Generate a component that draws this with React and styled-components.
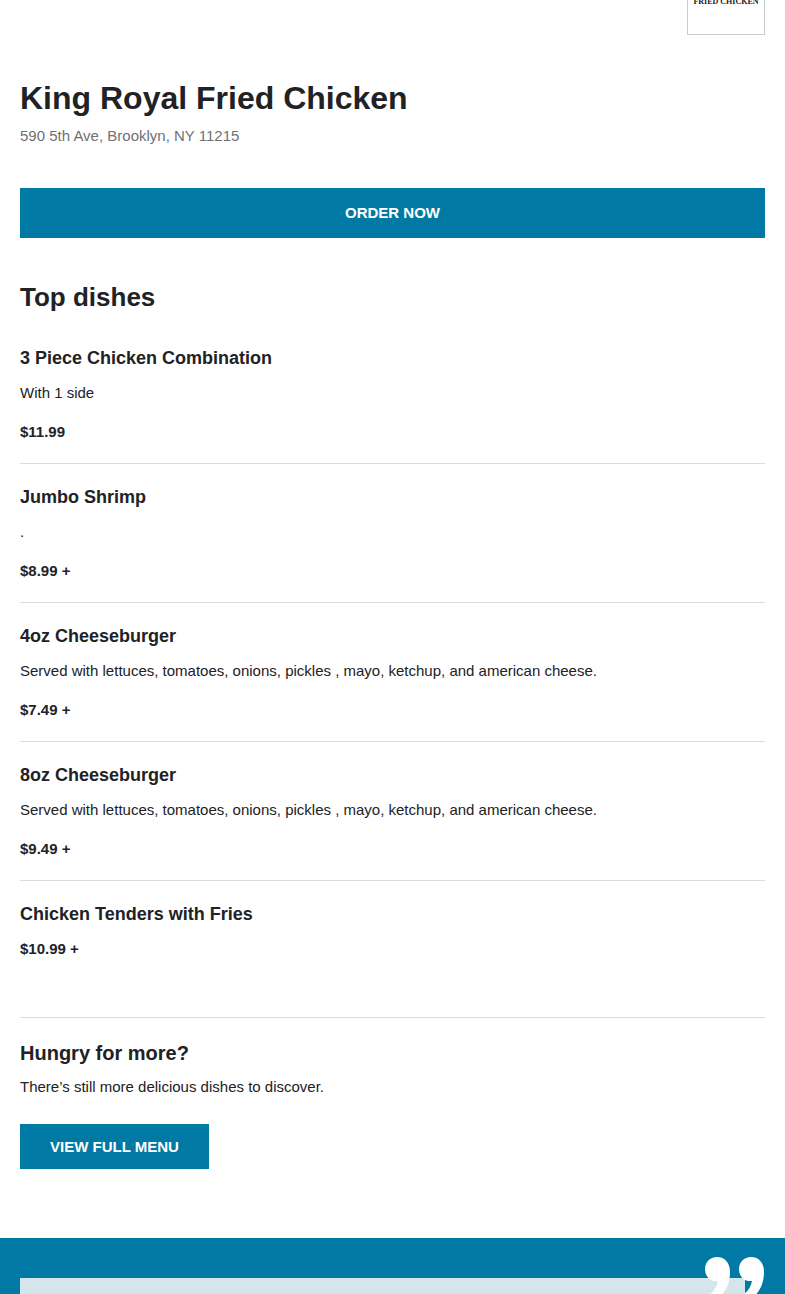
import React from "react";
import styled, { createGlobalStyle } from "styled-components";

const GlobalStyle = createGlobalStyle`
  * {
    box-sizing: border-box;
  }

  body {
    margin: 0;
    background: #fff;
    color: #212225;
    font-family: "Liberation Sans", Arial, sans-serif;
    font-size: 15px;
    line-height: 24px;
  }

  h1, h2, h3, p, ul {
    margin: 0;
    padding: 0;
  }
`;

const Container = styled.main`
  padding: 0 20px 69px;
`;

const LogoRow = styled.div`
  display: flex;
  justify-content: flex-end;
`;

const Logo = styled.div`
  width: 78px;
  height: 35px;
  border: 1px solid #ccc;
  border-top: none;
  color: #222;
  font-family: "Liberation Serif", serif;
  font-size: 8px;
  font-weight: 700;
  line-height: 4px;
  text-align: center;
  white-space: nowrap;
`;

const Title = styled.h1`
  margin-top: 43px;
  font-size: 32px;
  line-height: 40px;
`;

const Address = styled.p`
  margin-top: 6px;
  color: #6f7174;
`;

const Button = styled.button`
  display: block;
  width: ${({ $wide }) => ($wide ? "100%" : "auto")};
  margin-top: ${({ $wide }) => ($wide ? "40px" : "25px")};
  padding: ${({ $wide }) => ($wide ? "13px 30px" : "11px 30px 10px")};
  border: none;
  background: #007aa5;
  color: #fff;
  font-family: inherit;
  font-size: 15px;
  font-weight: 700;
  line-height: 24px;
  text-transform: uppercase;
  cursor: pointer;
`;

const SectionTitle = styled.h2`
  margin: 43px 0 12px;
  font-size: 26px;
  line-height: 32px;
`;

const DishList = styled.ul`
  list-style: none;
`;

const Dish = styled.li`
  padding: 21px 0 19px;
  border-bottom: 1px solid #dcdcdc;

  &:last-child {
    padding-bottom: 56px;
  }
`;

const DishName = styled.h3`
  font-size: 18px;
`;

const DishText = styled.p`
  margin: 11px 0 15px;
`;

const Price = styled.p`
  margin-top: 11px;
  font-weight: 700;
`;

const MoreTitle = styled.h2`
  margin: 23px 0 10px;
  font-size: 20px;
`;

const Reviews = styled.section`
  position: relative;
  padding: 40px 40px 0 20px;
  overflow: hidden;
  background: #007aa5;
`;

const ReviewCard = styled.div`
  height: 16px;
  background: #d4e5eb;
`;

const Quote = styled.svg`
  position: absolute;
  top: 19px;
  right: 20px;
  fill: #fff;
`;

const dishes = [
  { name: "3 Piece Chicken Combination", text: "With 1 side", price: "$11.99" },
  { name: "Jumbo Shrimp", text: ".", price: "$8.99 +" },
  {
    name: "4oz Cheeseburger",
    text: "Served with lettuces, tomatoes, onions, pickles , mayo, ketchup, and american cheese.",
    price: "$7.49 +",
  },
  {
    name: "8oz Cheeseburger",
    text: "Served with lettuces, tomatoes, onions, pickles , mayo, ketchup, and american cheese.",
    price: "$9.49 +",
  },
  { name: "Chicken Tenders with Fries", price: "$10.99 +" },
];

const App = () => {
  return (
    <>
      <GlobalStyle />
      <Container>
        <LogoRow>
          <Logo>FRIED CHICKEN</Logo>
        </LogoRow>
        <Title>King Royal Fried Chicken</Title>
        <Address>590 5th Ave, Brooklyn, NY 11215</Address>
        <Button type="button" $wide>Order now</Button>

        <SectionTitle>Top dishes</SectionTitle>
        <DishList>
          {dishes.map((dish) => (
            <Dish key={dish.name}>
              <DishName>{dish.name}</DishName>
              {dish.text && <DishText>{dish.text}</DishText>}
              <Price>{dish.price}</Price>
            </Dish>
          ))}
        </DishList>

        <MoreTitle>Hungry for more?</MoreTitle>
        <p>There’s still more delicious dishes to discover.</p>
        <Button type="button">View full menu</Button>
      </Container>

      <Reviews>
        <ReviewCard />
        <Quote width="60" height="50" viewBox="0 0 60 50" aria-hidden="true">
          <path d="M12 0C20 0 25 6 25 15C25 27 20 38 8 45L0 41C8 36 12 30 13 24C5 25 0 19 0 12C0 5 5 0 12 0Z" />
          <path d="M46 0C54 0 59 6 59 15C59 27 54 38 42 45L34 41C42 36 46 30 47 24C39 25 34 19 34 12C34 5 39 0 46 0Z" />
        </Quote>
      </Reviews>
    </>
  );
};

export default App;
